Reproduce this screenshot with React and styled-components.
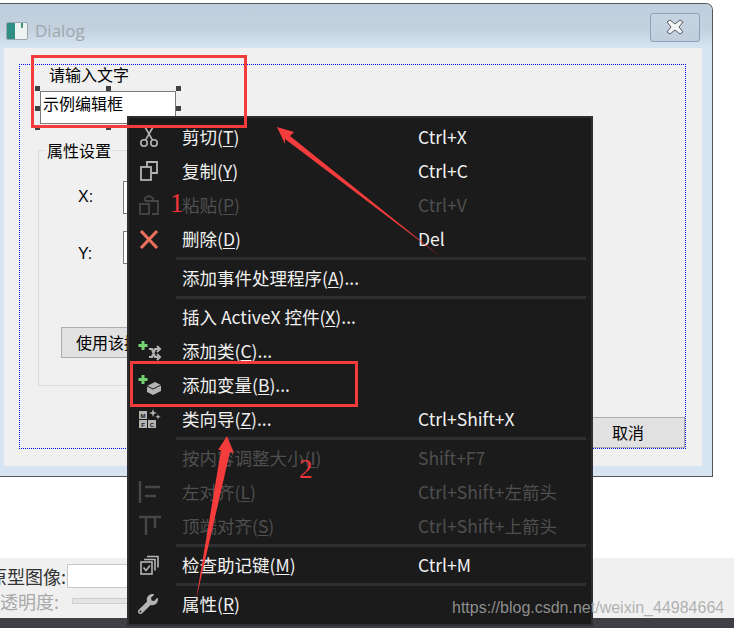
import React from 'react';
import styled, { createGlobalStyle } from 'styled-components';
import { FaWrench } from 'react-icons/fa';

const CJK = '"Noto Sans CJK SC", "Noto Sans", sans-serif';
const GREY = '#b4b4b4';
const DIM = '#464646';
const GREEN = '#74d274';

const ScissorsIcon = () => (
  <svg width="22" height="22" viewBox="0 0 22 22" fill="none" stroke={GREY} strokeWidth="1.6">
    <circle cx="6" cy="17" r="3.2" />
    <circle cx="16" cy="17" r="3.2" />
    <path d="M7.5 14.2 15 1M14.5 14.2 7 1" />
  </svg>
);

const CopyIcon = () => (
  <svg width="22" height="22" viewBox="0 0 22 22" fill="none" stroke={GREY} strokeWidth="1.8">
    <rect x="3" y="7" width="10" height="13" />
    <path d="M9 7V2h10v11h-6" />
  </svg>
);

const PasteIcon = () => (
  <svg width="22" height="22" viewBox="0 0 22 22" fill="none" stroke={DIM} strokeWidth="1.8">
    <rect x="2" y="10" width="9" height="10" />
    <path d="M7 7V4l4-2 4 2v3H7M15 7h5v13h-6" />
  </svg>
);

const DeleteIcon = () => (
  <svg width="22" height="22" viewBox="0 0 22 22" fill="none" stroke="#e8705c" strokeWidth="3.2">
    <path d="M3 3 19 20M19 3 3 20" />
  </svg>
);

const AddClassIcon = () => (
  <svg width="24" height="22" viewBox="0 0 24 22" fill="none">
    <path d="M5 1v9M.5 5.500h9" stroke={GREEN} strokeWidth="3" />
    <path d="M11 9h3l3 8h4M11 17h3l3-8h4" stroke={GREY} strokeWidth="2.200" />
    <path d="M19 6l3 3-3 3M19 14l3 3-3 3" stroke={GREY} strokeWidth="2" />
  </svg>
);

const AddVariableIcon = () => (
  <svg width="24" height="22" viewBox="0 0 24 22" fill="none">
    <path d="M5 1v9M.5 5.500h9" stroke={GREEN} strokeWidth="3" />
    <path d="M9 12l8-4 6 3v6l-8 4-6-3z" fill={GREY} />
    <path d="M9 12l6 3 8-4" stroke="#1b1b1b" strokeWidth="1" />
  </svg>
);

const WizardIcon = () => (
  <svg width="24" height="22" viewBox="0 0 24 22" fontFamily="Liberation Sans, sans-serif" fontSize="6" fontWeight="700" textAnchor="middle">
    <rect x="1" y="3" width="8" height="8" fill={GREY} />
    <rect x="1" y="12" width="8" height="8" fill={GREY} />
    <rect x="10" y="12" width="8" height="8" fill={GREY} />
    <text x="5" y="9.500" fill="#1b1b1b">M</text>
    <text x="5" y="18.500" fill="#1b1b1b">F</text>
    <text x="14" y="18.500" fill="#1b1b1b">C</text>
    <path d="M15 1l1 3 3 1-3 1-1 3-1-3-3-1 3-1zM20 6l.7 2 2 .7-2 .7-.7 2-.7-2-2-.7 2-.7z" fill={GREY} />
  </svg>
);

const AlignLeftIcon = () => (
  <svg width="24" height="24" viewBox="0 0 24 24" fill="none" stroke={DIM} strokeWidth="2.400">
    <path d="M2 1v22M7 7h15M7 16h11" />
  </svg>
);

const AlignTopIcon = () => (
  <svg width="24" height="22" viewBox="0 0 24 22" fill="none" stroke={DIM} strokeWidth="2.400">
    <path d="M1 2h22M8 2v18M17 2v11" />
  </svg>
);

const MnemonicIcon = () => (
  <svg width="22" height="22" viewBox="0 0 22 22" fill="none" stroke={GREY} strokeWidth="1.600">
    <rect x="3" y="8" width="11" height="12" />
    <path d="M5.500 13.500l2.500 3 4-5M6 5.500h11v11M9 2.500h11v11" />
  </svg>
);

const Annotations = () => (
  <AnnotationLayer width="734" height="628" viewBox="0 0 734 628">
    <polygon points="277,127 294,132 290,136 441,257 285,139 285,144" fill="#f53c3c" />
    <polygon points="227,436 234,453 230,452 196,600 221,450 218,450" fill="#f53c3c" />
  </AnnotationLayer>
);

const items = [
  { icon: <ScissorsIcon />, label: '剪切', key: 'T', shortcut: 'Ctrl+X' },
  { icon: <CopyIcon />, label: '复制', key: 'Y', shortcut: 'Ctrl+C' },
  { icon: <PasteIcon />, label: '粘贴', key: 'P', shortcut: 'Ctrl+V', off: true },
  { icon: <DeleteIcon />, label: '删除', key: 'D', shortcut: 'Del' },
  { sep: true },
  { label: '添加事件处理程序', key: 'A', more: true },
  { sep: true },
  { label: '插入 ActiveX 控件', key: 'X', more: true },
  { icon: <AddClassIcon />, label: '添加类', key: 'C', more: true },
  { icon: <AddVariableIcon />, label: '添加变量', key: 'B', more: true },
  { icon: <WizardIcon />, label: '类向导', key: 'Z', more: true, shortcut: 'Ctrl+Shift+X' },
  { sep: true },
  { label: '按内容调整大小', key: 'I', shortcut: 'Shift+F7', off: true },
  { icon: <AlignLeftIcon />, label: '左对齐', key: 'L', shortcut: 'Ctrl+Shift+左箭头', off: true },
  { icon: <AlignTopIcon />, label: '顶端对齐', key: 'S', shortcut: 'Ctrl+Shift+上箭头', off: true },
  { sep: true },
  { icon: <MnemonicIcon />, label: '检查助记键', key: 'M', shortcut: 'Ctrl+M' },
  { sep: true },
  { icon: <FaWrench size={20} color={GREY} />, label: '属性', key: 'R' },
];

export default function App() {
  return (
    <Page>
      <GlobalStyle />
      <DialogWindow>
        <TitleBar>
          <WindowIcon />
          <TitleText>Dialog</TitleText>
          <CloseButton>
            <svg width="20" height="16" viewBox="0 0 20 16">
              <path d="M2 3l3-2 5 4 5-4 3 2-4 5 4 5-3 2-5-4-5 4-3-2 4-5z" fill="#f4f4f4" stroke="#555c66" strokeWidth="1" />
            </svg>
          </CloseButton>
        </TitleBar>
        <Client>
          <DesignArea>
            <StaticLabel>请输入文字</StaticLabel>
            <EditBox>
              示例编辑框
              <Handle $left="-6px" $top="-6px" />
              <Handle $left="calc(50% - 2px)" $top="-6px" />
              <Handle $left="calc(100% + 1px)" $top="-6px" />
              <Handle $left="-6px" $top="14px" />
              <Handle $left="calc(100% + 1px)" $top="14px" />
              <Handle $left="-6px" $top="calc(100% + 2px)" />
              <Handle $left="calc(50% - 2px)" $top="calc(100% + 2px)" />
            </EditBox>
            <GroupBox>
              <GroupTitle>属性设置</GroupTitle>
              <AxisRow>
                <AxisLabel $nudge={-2}>X:</AxisLabel>
                <AxisInput />
              </AxisRow>
              <AxisRow>
                <AxisLabel $nudge={12}>Y:</AxisLabel>
                <AxisInput />
              </AxisRow>
              <UseButton>使用该控件</UseButton>
            </GroupBox>
            <CancelButton>取消</CancelButton>
          </DesignArea>
        </Client>
      </DialogWindow>
      <BottomPanel>
        <PanelRow>
          <PanelLabel>原型图像:</PanelLabel>
          <PanelInput />
        </PanelRow>
        <PanelRow>
          <OpacityLabel>透明度:</OpacityLabel>
          <OpacityTrack />
        </PanelRow>
      </BottomPanel>
      <StatusStrip />

      <Menu>
        {items.map((item, i) =>
          item.sep ? (
            <Separator key={i} />
          ) : (
            <MenuRow key={i} $off={item.off}>
              <IconCell>{item.icon}</IconCell>
              <span>
                {item.label}(<u>{item.key}</u>){item.more ? '...' : ''}
              </span>
              <span>{item.shortcut}</span>
            </MenuRow>
          )
        )}
      </Menu>

      <RedFrame $x={31} $y={55} $w={216} $h={73} />
      <RedFrame $x={130} $y={361} $w={228} $h={46} />
      <Annotations />
      <RedDigit $x={170} $y={186}>1</RedDigit>
      <RedDigit $x={299} $y={452}>2</RedDigit>
      <Watermark>https://blog.csdn.net/weixin_44984664</Watermark>
    </Page>
  );
}

const GlobalStyle = createGlobalStyle`
  html, body {
    margin: 0;
    padding: 0;
    background: #fff;
  }
`;

const Page = styled.div`
  position: relative;
  width: 734px;
  height: 628px;
  overflow: hidden;
  background: #fff;
  padding-top: 3px;
  box-sizing: border-box;
  display: flex;
  flex-direction: column;
  font-family: ${CJK};
`;

const DialogWindow = styled.div`
  width: 713px;
  height: 474px;
  flex: none;
  box-sizing: border-box;
  border: 1.5px solid #555;
  border-left: none;
  border-top-right-radius: 7px;
  background: #d7e4f1;
  padding: 0 10px 10px 4px;
  display: flex;
  flex-direction: column;
`;

const TitleBar = styled.div`
  height: 44px;
  flex: none;
  margin: 0 -10px 0 -4px;
  padding: 0 12px 0 6px;
  border-top-right-radius: 6px;
  background: linear-gradient(#bfcfdd 0%, #c3d1de 55%, #d7e4f1 100%);
  display: flex;
  align-items: center;
`;

const WindowIcon = styled.div`
  width: 20px;
  height: 16px;
  margin-top: 9px;
  border: 1px solid #9aa6b0;
  border-radius: 2px;
  background:
    linear-gradient(90deg, transparent 0 70%, #3f8f7f 70% 80%, transparent 80%) top / 100% 30% no-repeat,
    linear-gradient(90deg, #2f8f84 0 38%, #eef2f0 38% 100%);
`;

const TitleText = styled.div`
  margin: 9px 0 0 7px;
  font-family: "Open Sans", sans-serif;
  font-size: 17px;
  color: #9ea7ae;
`;

const CloseButton = styled.div`
  margin: 2px 0 0 auto;
  width: 50px;
  height: 29px;
  box-sizing: border-box;
  border: 1px solid #8ea1b8;
  border-radius: 3px;
  background: linear-gradient(#c6d3e0, #c1cfdd);
  display: flex;
  align-items: center;
  justify-content: center;
`;

const Client = styled.div`
  flex: 1;
  background: #f0f0f0;
  color: #000;
  font-size: 16px;
  padding: 16px 0 0 15px;
`;

const DesignArea = styled.div`
  width: 667px;
  height: 385px;
  box-sizing: border-box;
  border: 1px dotted #0000ff;
  display: flex;
  flex-direction: column;
  align-items: flex-start;
`;

const StaticLabel = styled.div`
  margin-left: 29px;
  line-height: 19px;
`;

const EditBox = styled.div`
  position: relative;
  margin: 7px 0 0 20px;
  width: 136px;
  height: 33px;
  box-sizing: border-box;
  border: 1px solid #7a7a7a;
  background: #fff;
  padding-left: 2px;
  line-height: 23px;
`;

const Handle = styled.div`
  position: absolute;
  left: ${(p) => p.$left};
  top: ${(p) => p.$top};
  width: 5px;
  height: 5px;
  background: #404040;
`;

const GroupBox = styled.fieldset`
  margin: 14px 0 0 18px;
  width: 460px;
  height: 248px;
  box-sizing: border-box;
  border: 1px solid #dcdcdc;
  padding: 19px 0 0 6px;
  display: flex;
  flex-direction: column;
  align-items: flex-start;
  gap: 17px;
`;

const GroupTitle = styled.legend`
  padding: 0 2px;
  line-height: 24px;
`;

const AxisRow = styled.div`
  margin-left: 33px;
  display: grid;
  grid-template-columns: 45px 200px;
  align-items: center;
`;

const AxisLabel = styled.div`
  margin-top: ${(p) => p.$nudge}px;
  font-family: "Liberation Sans", sans-serif;
  font-size: 16px;
`;

const AxisInput = styled.div`
  height: 33px;
  box-sizing: border-box;
  border: 1px solid #7a7a7a;
  background: #fff;
`;

const UseButton = styled.div`
  margin: 46px 0 0 16px;
  width: 114px;
  height: 31px;
  box-sizing: border-box;
  border: 1px solid #adadad;
  background: #e1e1e1;
  padding-left: 14px;
  line-height: 28px;
  white-space: nowrap;
`;

const CancelButton = styled(UseButton)`
  margin: auto 0 0 auto;
  padding-left: 0;
  text-align: center;
`;

const BottomPanel = styled.div`
  margin-top: 81px;
  height: 60px;
  flex: none;
  background: #f0f0f0;
  padding-top: 5px;
  box-sizing: border-box;
  display: flex;
  flex-direction: column;
`;

const PanelRow = styled.div`
  height: 25px;
  display: flex;
  align-items: center;
  white-space: nowrap;
`;

const PanelLabel = styled.div`
  margin-left: -11px;
  width: 78px;
  flex: none;
  font-size: 18px;
  line-height: 24px;
  color: #333;
`;

const PanelInput = styled.div`
  width: 120px;
  height: 24px;
  box-sizing: border-box;
  border: 1px solid #c8c8c8;
  background: #fff;
`;

const OpacityLabel = styled(PanelLabel)`
  margin-left: 0;
  width: 72px;
  color: #a8a8a8;
`;

const OpacityTrack = styled.div`
  width: 200px;
  height: 6px;
  box-sizing: border-box;
  border: 1px solid #cfcfcf;
  background: #e4e4e4;
`;

const StatusStrip = styled.div`
  height: 10px;
  flex: none;
  background: #3f3f46;
`;

const Menu = styled.div`
  position: absolute;
  left: 127px;
  top: 116px;
  width: 466px;
  box-sizing: border-box;
  background: #1b1b1b;
  border: 2px solid #2f2f33;
  padding-top: 2px;
  padding-bottom: 3px;
`;

const MenuRow = styled.div`
  height: 34px;
  display: grid;
  grid-template-columns: 53px 236px 1fr;
  align-items: center;
  color: ${(p) => (p.$off ? '#4f4f4f' : '#f1f1f1')};
  font-size: 17.5px;
  white-space: nowrap;

  span {
    padding-bottom: 2px;
  }

  u {
    text-underline-offset: 2px;
  }
`;

const IconCell = styled.div`
  padding-left: 9px;
  height: 24px;
  display: flex;
  align-items: center;
`;

const Separator = styled.div`
  height: 3px;
  margin: 1px 5px 1px 47px;
  background: #2f2f33;
`;

const RedFrame = styled.div`
  position: absolute;
  left: ${(p) => p.$x}px;
  top: ${(p) => p.$y}px;
  width: ${(p) => p.$w}px;
  height: ${(p) => p.$h}px;
  box-sizing: border-box;
  border: 3px solid #f53c3c;
`;

const AnnotationLayer = styled.svg`
  position: absolute;
  left: 0;
  top: 0;
  pointer-events: none;
`;

const RedDigit = styled.div`
  position: absolute;
  left: ${(p) => p.$x}px;
  top: ${(p) => p.$y}px;
  font-family: "Liberation Serif", serif;
  font-size: 27px;
  line-height: 34px;
  color: #f0353a;
`;

const Watermark = styled.div`
  position: absolute;
  left: 452px;
  top: 598px;
  font-family: "Liberation Sans", sans-serif;
  font-size: 16px;
  line-height: 20px;
  color: rgba(165, 165, 165, 0.85);
  white-space: nowrap;
`;
